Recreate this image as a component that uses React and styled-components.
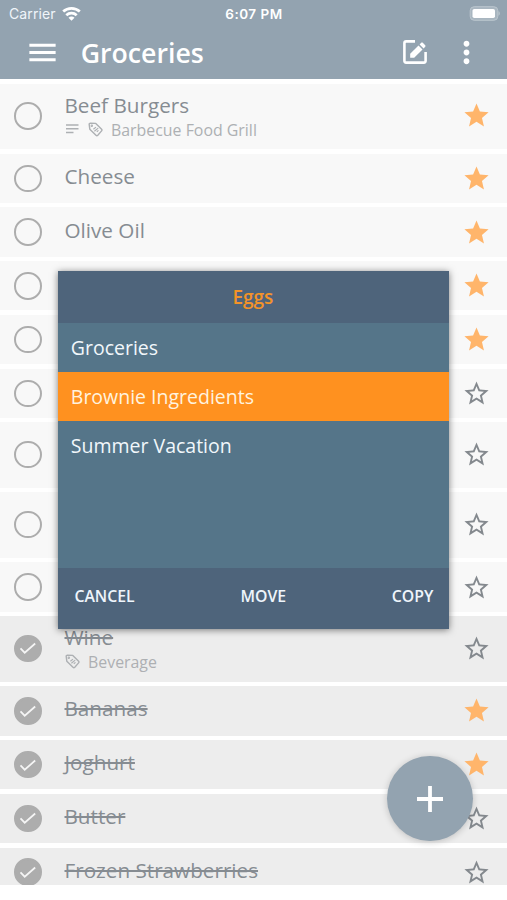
import React from 'react'
import styled, { createGlobalStyle } from 'styled-components'
import { MdMenu, MdMoreVert, MdStar, MdStarBorder } from 'react-icons/md'

const GlobalStyle = createGlobalStyle`
    * {
        box-sizing: border-box;
    }

    body {
        margin: 0;
        background: #ffffff;
        font-family: "Open Sans", "Noto Sans", sans-serif;
    }
`
const Screen = styled.div`
    position: relative;
    width: 507px;
    height: 900px;
    overflow: hidden;
    background: #ffffff;
`
const Header = styled.header`
    height: 79px;
    background: #93a3b0;
    color: #ffffff;
`
const StatusBar = styled.div`
    display: grid;
    grid-template-columns: 1fr auto 1fr;
    align-items: center;
    height: 27px;
    padding: 0 7px 0 9px;
    font-family: Inter, "Liberation Sans", sans-serif;
    font-size: 13.5px;
    line-height: 16px;
`
const Carrier = styled.div`
    display: flex;
    align-items: center;
    gap: 6px;
    color: #f0f5fa;
    font-size: 14px;
    letter-spacing: 0.1px;
`
const Clock = styled.div`
    padding-right: 1px;
    font-weight: 600;
    letter-spacing: 0.5px;
`
const Battery = styled.svg`
    justify-self: end;
`
const NavBar = styled.div`
    display: flex;
    align-items: center;
    height: 50px;
    padding: 0 23px 0 25px;
`
const NavTitle = styled.h1`
    flex: 1;
    margin: 0 0 0 20.7px;
    padding-top: 1px;
    font-size: 26.7px;
    font-weight: 600;
    line-height: 36px;
`
const NavButton = styled.button`
    display: flex;
    padding: 0;
    border: 0;
    background: none;
    color: #ffffff;
    margin-left: ${props => props.$gap || 0}px;
`
const List = styled.ul`
    display: flex;
    flex-direction: column;
    gap: 4.5px;
    height: 806px;
    margin: 0;
    padding: 4.6px 0 0;
    overflow: hidden;
    list-style: none;
`
const Row = styled.li`
    display: flex;
    flex: none;
    align-items: center;
    height: ${props => (props.$tall ? 65.55 : 49.25)}px;
    padding: 0 16px 0 14px;
    background: ${props => (props.$done ? '#ededed' : '#f8f8f8')};
    padding-bottom: ${props => (props.$tall ? 1.2 : 0)}px;
`
const Bullet = styled.span`
    display: flex;
    flex: none;
    align-items: center;
    justify-content: center;
    width: 27.5px;
    height: 27.5px;
    border: 2px solid #adadad;
    border-radius: 50%;
    background: ${props => (props.$done ? '#adadad' : 'transparent')};
`
const ItemText = styled.div`
    flex: 1;
    margin-left: 23px;
    padding-top: ${props => (props.$tall ? 8 : 0)}px;
`
const ItemName = styled.div`
    color: #868c92;
    font-size: 20.7px;
    line-height: 26px;
    margin-top: -5px;
    text-decoration: ${props => (props.$done ? 'line-through' : 'none')};
    text-decoration-thickness: 2px;
`
const ItemMeta = styled.div`
    display: flex;
    align-items: center;
    height: 25px;
    color: #adb0b3;
    font-size: 15.9px;
    line-height: 25px;
`
const StarButton = styled.span`
    display: flex;
    color: ${props => (props.$on ? '#ffb56b' : '#84898e')};
`
const Fab = styled.button`
    position: absolute;
    top: 755.5px;
    left: 387px;
    display: flex;
    align-items: center;
    justify-content: center;
    width: 85.5px;
    height: 85.5px;
    padding: 1px 0 0;
    border: 0;
    border-radius: 50%;
    background: #93a3b0;
    box-shadow: 0 1px 7px rgba(0, 0, 0, 0.2);
`
const Dialog = styled.section`
    position: absolute;
    top: 270.5px;
    left: 58.4px;
    display: flex;
    flex-direction: column;
    width: 391px;
    height: 358px;
    background: #557589;
    box-shadow: 0 1px 7px rgba(0, 0, 0, 0.5);
`
const DialogTitle = styled.h2`
    height: 52.5px;
    margin: 0;
    padding-right: 2px;
    background: #4e647b;
    color: #f39329;
    font-size: 19px;
    font-weight: 600;
    line-height: 52px;
    text-align: center;
`
const Choices = styled.div`
    flex: 1;
`
const Choice = styled.div`
    height: 49px;
    padding-left: 12.4px;
    background: ${props => (props.$selected ? '#ff911f' : 'transparent')};
    color: ${props => (props.$selected ? '#fff3df' : '#f1f7fb')};
    font-size: 19.5px;
    line-height: 50px;
`
const Actions = styled.div`
    display: flex;
    align-items: center;
    justify-content: space-between;
    height: 61px;
    padding: 0 16px 5px;
    background: #4e647b;
`
const Action = styled.button`
    padding: 0;
    border: 0;
    background: none;
    color: #eef5fc;
    font-family: inherit;
    font-size: 15.8px;
    font-weight: 600;
`
const MetaIcon = styled.svg`
    flex: none;
    margin-right: ${props => props.$gap}px;
`

const items = [
    { name: 'Beef Burgers', note: true, tags: 'Barbecue Food Grill', star: true },
    { name: 'Cheese', star: true },
    { name: 'Olive Oil', star: true },
    { name: '', star: true },
    { name: '', star: true },
    { name: '' },
    { name: '', tall: true },
    { name: '', tall: true },
    { name: '' },
    { name: 'Wine', tags: 'Beverage', done: true },
    { name: 'Bananas', star: true, done: true },
    { name: 'Joghurt', star: true, done: true },
    { name: 'Butter', done: true },
    { name: 'Frozen Strawberries', done: true },
]

const choices = ['Groceries', 'Brownie Ingredients', 'Summer Vacation']

const WifiIcon = () => (
    <svg width="19" height="14" viewBox="0 0 19 14" fill="none" stroke="#fff" strokeWidth="2.7">
        <path d="M1.2 4.6C5.8.3 13.2.3 17.8 4.6" />
        <path d="M4.3 8.2c2.9-2.8 7.5-2.8 10.4 0" />
        <path d="M9.5 13.7L6.5 10.7c1.6-1.6 4.4-1.6 6 0z" fill="#fff" stroke="none" />
    </svg>
)

const BatteryIcon = () => (
    <Battery width="31" height="15" viewBox="0 0 31 15">
        <rect x="1.2" y="0.7" width="27.6" height="13.6" rx="4" fill="#a9b6c0" stroke="#bbc6ce" />
        <rect x="3.5" y="3" width="22.5" height="9" rx="1.8" fill="#fff" />
        <path d="M29.6 5.3c1.4.5 1.4 3.9 0 4.4z" fill="#c5ced5" />
    </Battery>
)

const EditIcon = () => (
    <svg width="26" height="26" viewBox="0 0 26 26" fill="none">
        <path d="M13 2.4H4.2a1.8 1.8 0 0 0-1.8 1.8v17.6a1.8 1.8 0 0 0 1.8 1.8h17.6a1.8 1.8 0 0 0 1.8-1.8V13" stroke="#fff" strokeWidth="2.6" />
        <path d="M8.2 18.8v-4l8.3-8.3 4 4-8.3 8.3z" fill="#fff" />
        <path d="M17.6 5.4l1.6-1.6c.5-.5 1.1-.5 1.6 0l2.4 2.4c.5.5.5 1.1 0 1.6l-1.6 1.6z" fill="#fff" />
    </svg>
)

const NoteIcon = () => (
    <MetaIcon $gap={9} width="14" height="12" viewBox="0 0 14 12" stroke="#adb0b3" strokeWidth="1.5">
        <path d="M1 1h12.5M1 4.8h12.5M1 8.6h7.5" />
    </MetaIcon>
)

const TagIcon = () => (
    <MetaIcon $gap={8.5} width="15" height="17" viewBox="0 0 15 17" fill="none" stroke="#adb0b3" strokeWidth="1.4" strokeLinejoin="round">
        <path d="M1.2 2.4l.6 4.8 6.2 6.1c.6.6 1.2.6 1.8 0l3.8-4.4c.5-.6.5-1 0-1.6L7.8 1.4 2.4 1.2c-.8 0-1.3.4-1.2 1.2z" />
        <circle cx="3.8" cy="3.8" r="0.5" />
        <path d="M5.4 7.2l2.6-2.1M6.4 9.2l3.8-3.1M8.8 9.8l1.7-1.4" strokeWidth="1.2" />
    </MetaIcon>
)

const CheckIcon = () => (
    <svg width="18" height="14" viewBox="0 0 18 14" fill="none" stroke="#f5f5f5" strokeWidth="1.7">
        <path d="M1.5 7.3l4.2 4.4L16.2 2.5" />
    </svg>
)

const Item = ({ name, note, tags, star, tall, done }) => (
    <Row $tall={tall || !!tags} $done={done}>
        <Bullet $done={done}>{done && <CheckIcon />}</Bullet>
        <ItemText $tall={!!tags}>
            <ItemName $done={done}>{name}</ItemName>
            {tags && (
                <ItemMeta>
                    {note && <NoteIcon />}
                    <TagIcon />
                    {tags}
                </ItemMeta>
            )}
        </ItemText>
        <StarButton $on={star}>
            {star ? <MdStar size={29} /> : <MdStarBorder size={29} />}
        </StarButton>
    </Row>
)

const App = () => (
    <>
        <GlobalStyle />
        <Screen>
            <Header>
                <StatusBar>
                    <Carrier>Carrier <WifiIcon /></Carrier>
                    <Clock>6:07 PM</Clock>
                    <BatteryIcon />
                </StatusBar>
                <NavBar>
                    <NavButton><MdMenu size={35} /></NavButton>
                    <NavTitle>Groceries</NavTitle>
                    <NavButton><EditIcon /></NavButton>
                    <NavButton $gap={21}><MdMoreVert size={35} /></NavButton>
                </NavBar>
            </Header>
            <List>
                {items.map((item, i) => <Item key={i} {...item} />)}
            </List>
            <Fab>
                <svg width="26" height="26" viewBox="0 0 26 26" stroke="#fff" strokeWidth="3.8">
                    <path d="M13 0v26M0 13h26" />
                </svg>
            </Fab>
            <Dialog>
                <DialogTitle>Eggs</DialogTitle>
                <Choices>
                    {choices.map((choice, i) => (
                        <Choice key={choice} $selected={i === 1}>{choice}</Choice>
                    ))}
                </Choices>
                <Actions>
                    <Action>CANCEL</Action>
                    <Action>MOVE</Action>
                    <Action>COPY</Action>
                </Actions>
            </Dialog>
        </Screen>
    </>
)

export default App
